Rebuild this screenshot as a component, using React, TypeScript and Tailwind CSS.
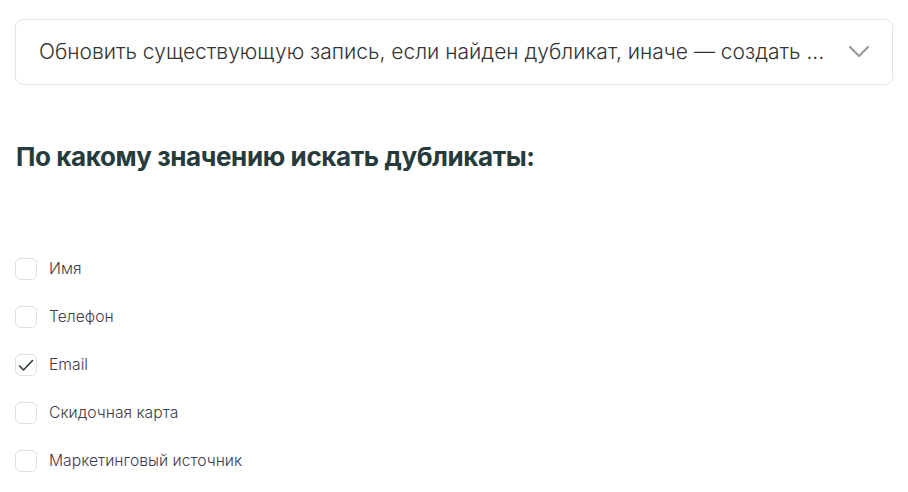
import React from "react";

const items = [
  { label: "Имя", checked: false },
  { label: "Телефон", checked: false },
  { label: "Email", checked: true },
  { label: "Скидочная карта", checked: false },
  { label: "Маркетинговый источник", checked: false },
];

export default function App() {
  return (
    <div
      className="w-[908px] h-[492px] bg-white px-[15px] pt-[19px]"
      style={{ fontFamily: "Inter, 'Noto Sans', sans-serif" }}
    >
      <div className="h-[66px] border border-[#e3e3e3] rounded-[8px] flex items-center pl-[23px] pr-[22px]">
        <span className="flex-1 text-[21px] font-light text-[#333333] tracking-[0px] whitespace-nowrap overflow-hidden">
          Обновить существующую запись, если найден дубликат, иначе — создать ...
        </span>
        <svg width="22" height="14" viewBox="0 0 22 14" className="ml-4">
          <path d="M2 2 L11 11 L20 2" fill="none" stroke="#9a9a9a" strokeWidth="2.2" strokeLinecap="round" strokeLinejoin="round" />
        </svg>
      </div>
      <h2 className="mt-[55px] pl-[1px] text-[26px] leading-[34px] font-bold text-[#263b3b] tracking-[-0.4px]">
        По какому значению искать дубликаты:
      </h2>
      <div className="mt-[84px] flex flex-col gap-[26px]">
        {items.map((it) => (
          <div key={it.label} className="flex items-center h-[22px]">
            <div className="w-[22px] h-[22px] border border-[#e0e0e0] rounded-[6px] flex items-center justify-center">
              {it.checked && (
                <svg width="16" height="13" viewBox="0 0 16 13">
                  <path d="M1.5 7 L5.5 11 L14.5 1.5" fill="none" stroke="#2c3d3d" strokeWidth="1.6" strokeLinecap="round" strokeLinejoin="round" />
                </svg>
              )}
            </div>
            <span className="ml-[12px] text-[15.7px] font-light text-[#3e3b50]">{it.label}</span>
          </div>
        ))}
      </div>
    </div>
  );
}
